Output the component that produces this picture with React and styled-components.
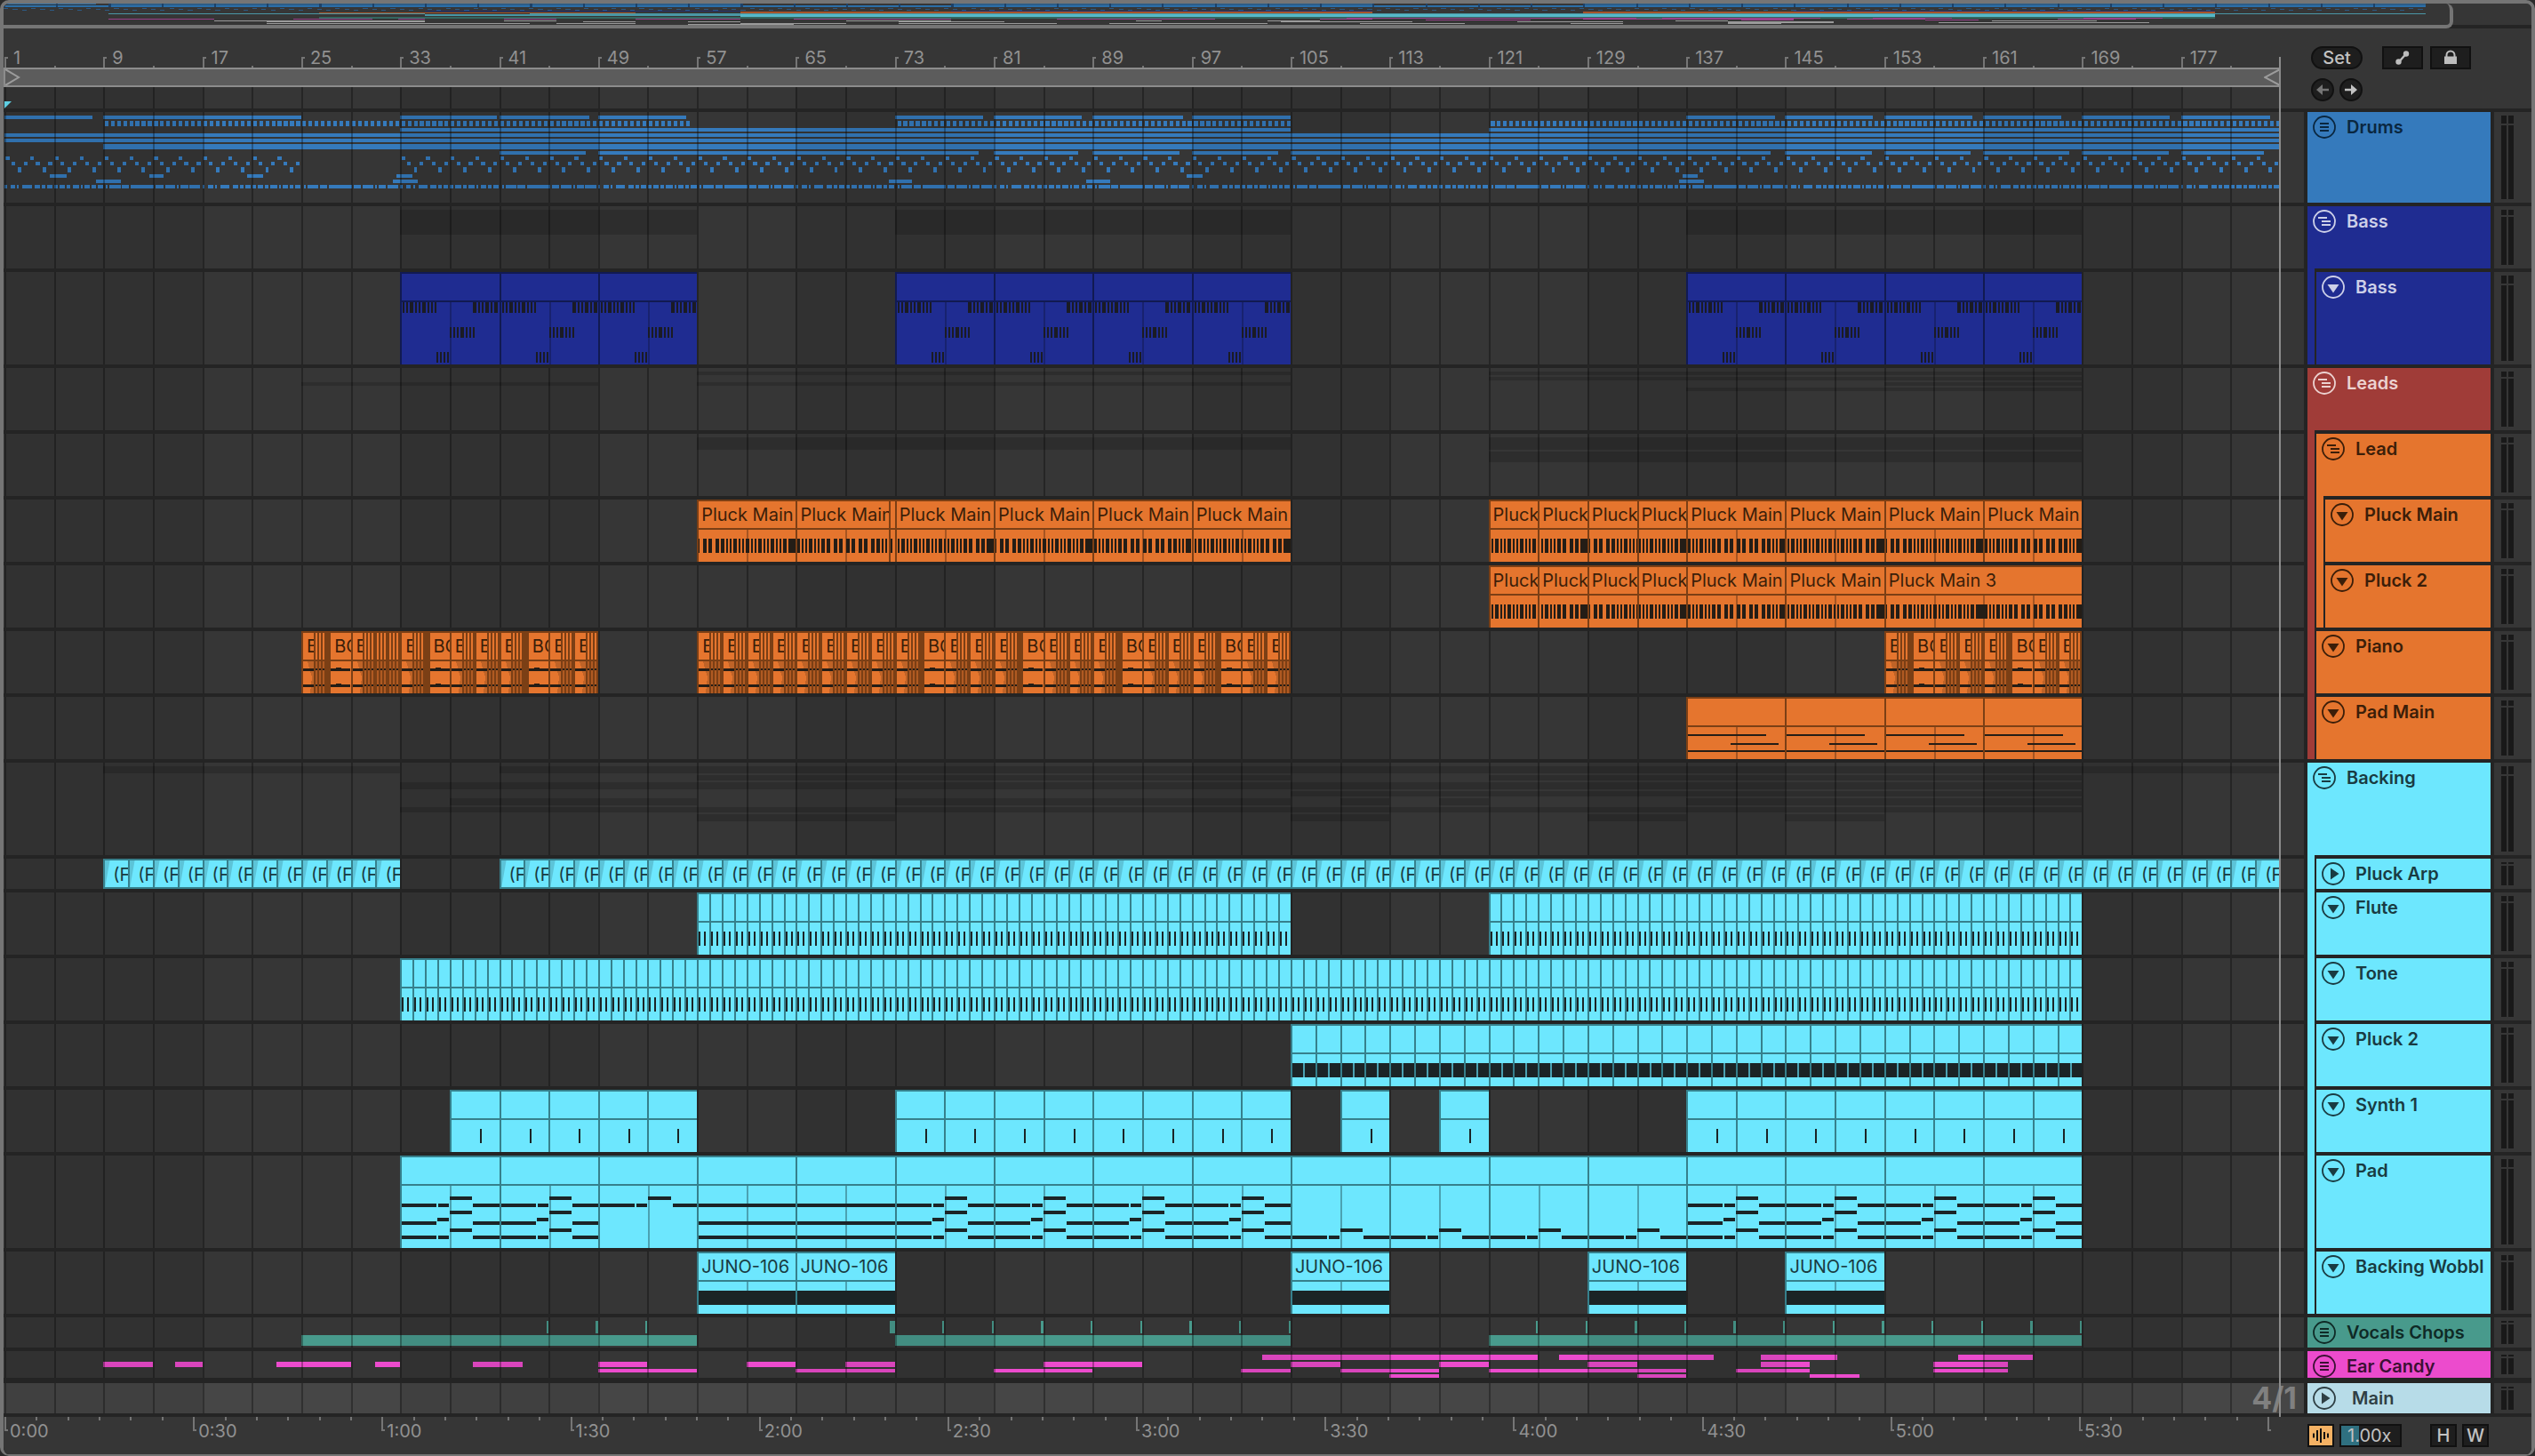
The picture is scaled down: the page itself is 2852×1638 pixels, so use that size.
import React from "react";
import styled, { createGlobalStyle } from "styled-components";

const BARS = 184;

const colors = {
  panel: "#363636",
  gap: "#242424",
  frame: "#757575",
  line: "#8c8c8c",
  text: "#919191",
  dark: "#1e1e1e",
  black: "#111111",
};

const blue = { fill: "#357abc", ink: "#0a2740" };
const navy = {
  fill: "#1f2c91",
  ink: "#cdd0e8",
  edge: "#111a52",
  inner: "#18226f",
  note: "#1a1b24",
};
const red = { fill: "#a03c38", ink: "#ecd2d0" };
const orange = {
  fill: "#e5752e",
  ink: "#3b1e09",
  edge: "#7b3f15",
  inner: "#a65522",
  note: "#241d16",
};
const cyan = {
  fill: "#6de7fe",
  ink: "#193b42",
  edge: "#36808c",
  inner: "#4ba2b2",
  note: "#1b2426",
};
const green = { fill: "#489a8c", ink: "#0f2a26" };
const pink = { fill: "#ec4bcd", ink: "#3c1034" };
const pale = { fill: "#b7dce8", ink: "#2f3f44" };

/* ---------- clip note shapes: [x, y, width, height] in clip pixels ---------- */

const runs = (list, y, h, unit = 2) =>
  list.map(([x, w]) => [x * unit, y, w * unit, h]);

const pluckA = runs(
  [
    [1.5, 1], [3.5, 2], [6.5, 1], [8.5, 1], [10.5, 2], [13.5, 1], [15.5, 1],
    [17.5, 2], [20.5, 1], [22.5, 1], [24.5, 2], [27.5, 1], [29.5, 1],
    [31.5, 2], [34.5, 1], [36.5, 1], [38.5, 2], [41.5, 2], [45.5, 2],
    [48.5, 2], [51.5, 4.5],
  ],
  10,
  16
);
const pluckB = runs(
  [
    [0.5, 1], [3.5, 2], [6.5, 2], [10.5, 2], [13.5, 2], [16.5, 1], [18.5, 1],
    [20.5, 2], [23.5, 1], [25.5, 1], [27.5, 2], [30.5, 1], [32.5, 1],
    [34.5, 2], [37.5, 1], [39.5, 1], [41.5, 2], [44.5, 1], [46.5, 1],
    [48.5, 2], [51.5, 4.5],
  ],
  10,
  16
);
const pluckC = runs(
  [
    [0.5, 2], [3.5, 1], [5.5, 1], [7.5, 2], [10.5, 1], [12.5, 1], [14.5, 2],
    [17.5, 2], [21.5, 2], [24.5, 2], [28.5, 2], [31.5, 2], [35.5, 2],
    [38.5, 2], [42.5, 2], [45.5, 2], [48.5, 1], [50.5, 1], [52.5, 3],
  ],
  10,
  16
);
const secondHalf = (notes) =>
  notes.filter(([x]) => x >= 55).map(([x, ...rest]) => [x - 55, ...rest]);

const bassNotes = [
  ...runs([[1.5, 1], [3.5, 1], [5.5, 2], [8.5, 1], [10.5, 1], [12.5, 2], [15.5, 1], [17.5, 1], [19.5, 1]], 0, 12),
  ...runs([[41, 2], [44, 1], [46, 1], [48, 2], [51, 1], [53, 2]], 0, 12),
  ...runs([[28, 1], [30, 1], [32, 1], [34, 2], [37, 1], [39, 1], [41, 1]], 28, 12),
  ...runs([[20.5, 1], [22.5, 1], [24.5, 1], [26.5, 1]], 56, 12),
];

const padMainNotes = [
  [0, 8, 90, 2],
  [50, 18, 54, 2],
  [0, 26, 112, 2],
];

const padFull = [
  [0, 20, 41, 4], [43, 20, 12, 4], [82, 20, 30, 4],
  [56, 12, 25, 4],
  [56, 28, 25, 4],
  [42, 36, 13, 4],
  [0, 40, 41, 4], [82, 40, 30, 4],
  [56, 48, 25, 4],
  [0, 56, 41, 4], [43, 56, 12, 4], [82, 56, 30, 4],
];
const padHigh = [[0, 20, 41, 4], [43, 20, 12, 4], [56, 12, 26, 4], [84, 20, 28, 4]];
const padHeld = [[0, 20, 112, 4], [0, 40, 112, 4], [0, 56, 112, 4]];
const padLow = [[0, 56, 41, 4], [43, 56, 12, 4], [56, 48, 25, 4], [82, 56, 30, 4]];

/* ---------- clips ---------- */

const repeat = (from, to, length, extra = {}) => {
  const clips = [];
  for (let at = from; at < to; at += length) {
    clips.push({ at, length, ...extra });
  }
  return clips;
};

const pianoBlock = (from, to) => {
  const clips = [];
  for (let at = from; at < to; at += 2) {
    const long = (at - from) % 8 === 2 && (from !== 57 || at >= 73);
    if (long) {
      clips.push({ at, length: 0.25, kind: "solid" });
      clips.push({ at: at + 0.25, length: 1.75, name: "BC", kind: "audio" });
    } else if (at === 31) {
      clips.push({ at, length: 1, kind: "slivers" });
      clips.push({ at: at + 1, length: 1, kind: "slivers" });
    } else {
      clips.push({ at, length: 1, name: "B", kind: "audio", fade: true });
      clips.push({ at: at + 1, length: 1, kind: "slivers" });
    }
  }
  return clips;
};

const main8 = { length: 8, name: "Pluck Main" };
const main4 = { length: 4, name: "Pluck Main" };
const eighths = [
  { at: 121, ...main4, notes: pluckA },
  { at: 125, ...main4, notes: secondHalf(pluckA) },
  { at: 129, ...main4, notes: pluckB },
  { at: 133, ...main4, notes: secondHalf(pluckB) },
  { at: 137, ...main8, notes: pluckC },
  { at: 145, ...main8, notes: pluckA },
];

const lanes = {
  bass: [
    ...repeat(33, 57, 8, { notes: bassNotes }),
    ...repeat(73, 105, 8, { notes: bassNotes }),
    ...repeat(137, 169, 8, { notes: bassNotes }),
  ],
  pluckMain: [
    { at: 57, ...main8, notes: pluckB },
    { at: 65, ...main8, length: 7.5, notes: pluckC },
    { at: 72.5, length: 0.5, notes: [[2, 10, 2, 16]] },
    { at: 73, ...main8, notes: pluckA },
    { at: 81, ...main8, notes: pluckB },
    { at: 89, ...main8, notes: pluckC },
    { at: 97, ...main8, notes: pluckA },
    ...eighths,
    { at: 153, ...main8, notes: pluckB },
    { at: 161, ...main8, notes: pluckC },
  ],
  pluckTwo: [
    ...eighths,
    {
      at: 153,
      length: 16,
      name: "Pluck Main 3",
      notes: [...pluckB, ...pluckC.map(([x, ...rest]) => [x + 111, ...rest])],
    },
  ],
  piano: [...pianoBlock(25, 49), ...pianoBlock(57, 105), ...pianoBlock(153, 169)],
  padMain: repeat(137, 169, 8, { notes: padMainNotes }),
  arp: [
    ...repeat(9, 33, 2, { name: "(F", kind: "flat" }),
    ...repeat(41, 185, 2, { name: "(F", kind: "flat" }),
  ],
  flute: [
    ...repeat(57, 105, 1, { notes: [[2, 10, 2, 16], [8, 10, 2, 16]] }),
    ...repeat(121, 169, 1, { notes: [[2, 10, 2, 16], [8, 10, 2, 16]] }),
  ],
  tone: repeat(33, 169, 1, { notes: [[2, 10, 2, 16], [8, 10, 2, 16]] }),
  pluckCyan: repeat(105, 169, 2, {
    notes: [[0, 10, 28, 16], [14, 10, 2, 16, cyan.inner]],
  }),
  synth: [
    ...repeat(37, 57, 4),
    ...repeat(73, 105, 4),
    ...repeat(109, 113, 4),
    ...repeat(117, 121, 4),
    ...repeat(137, 169, 4),
  ].map((clip) => ({ ...clip, notes: [[34, 10, 2, 16]] })),
  pad: [
    ...repeat(33, 49, 8, { notes: padFull }),
    ...repeat(49, 57, 8, { notes: padHigh }),
    ...repeat(57, 73, 8, { notes: padHeld }),
    ...repeat(73, 105, 8, { notes: padFull }),
    ...repeat(105, 137, 8, { notes: padLow }),
    ...repeat(137, 169, 8, { notes: padFull }),
  ],
  wobble: [57, 65, 105, 129, 145].map((at) => ({
    at,
    length: 8,
    name: "JUNO-106",
    notes: [[0, 10, 112, 16]],
  })),
};

/* ---------- group previews: [from bar, to bar, y, height] ---------- */

const span = (list, y, h) => list.map(([a, b]) => [a, b, y, h]);

const every = (from, to, step, width, y, h) => {
  const list = [];
  for (let at = from; at < to; at += step) {
    list.push([at, at + width, y, h]);
  }
  return list;
};

const kickRuns = [
  [0, 5], [13, 24], [28, 32], [40, 60], [67, 79], [83, 91], [95, 106],
  [110, 118], [122, 134], [138, 146], [150, 165], [169, 173], [177, 189],
  [193, 201], [205, 217], [224, 228], [232, 256], [259, 275], [279, 330],
  [334, 350], [354, 377], [381, 385], [389, 405], [408, 432],
];
const kicks = [];
for (let at = 1; at < 185; at += 16) {
  kickRuns.forEach(([a, b]) => {
    const start = at + a / 27.27;
    if (start < 185) {
      kicks.push([start, Math.min(at + b / 27.27, 185), 82, 4]);
    }
  });
}

const previews = {
  drums: [
    ...span(
      [
        [1, 8.1], [9, 25], [33, 40.8], [41, 48.3], [49, 56.1], [73, 80.1],
        [81, 88.1], [89, 96.3], [97, 105], [137, 144.2], [145, 152.1],
        [153, 160.1], [161, 167.3], [169, 176.1], [177, 184.2],
      ],
      4,
      4
    ),
    ...every(9.1, 56.2, 0.5, 0.3, 10, 6),
    ...every(73.2, 105, 0.5, 0.3, 10, 6),
    ...every(121.2, 185, 0.5, 0.3, 10, 6),
    ...span([[33, 105], [121, 185]], 18, 4),
    ...span([[1, 185]], 24, 4),
    ...span([[1, 185]], 30, 4),
    ...span([[9, 185]], 36, 6),
    ...span(
      [
        [41, 48], [49, 79.8], [81, 87.8], [89, 96], [97, 104], [105, 143.8],
        [145, 152], [153, 160], [161, 168], [169, 176], [177, 183.7],
      ],
      44,
      4
    ),
    ...every(1.1, 24, 2, 0.3, 50, 4),
    ...every(33.1, 185, 2, 0.3, 50, 4),
    ...every(1.55, 25, 1, 0.3, 56, 4),
    ...every(33.55, 184.8, 1, 0.3, 56, 4),
    ...every(2.1, 25, 2, 0.28, 62, 6),
    ...every(34.1, 185, 2, 0.28, 62, 6),
    ...span([[4.7, 6], [12.7, 13.9], [20.6, 21.9], [32.7, 34], [96.6, 97.9], [136.7, 137.9]], 70, 4),
    ...span([[8.4, 10.4], [32.4, 34.4], [72.5, 74.4], [88.5, 90.4], [136.4, 138.4]], 76, 4),
    ...kicks,
  ],
  bassGroup: span([[33, 57], [73, 105], [137, 169]], 4, 28),
  leads: [
    ...span([[57, 105], [121, 169]], 4, 4),
    ...span([[121, 169]], 10, 4),
    ...span([[25, 49], [57, 105], [153, 169]], 16, 4),
    ...span([[137, 169]], 22, 4),
  ],
  lead: [
    ...span([[57, 105], [121, 169]], 4, 14),
    ...span([[121, 169]], 20, 12),
  ],
  backing: [
    ...span([[9, 33], [41, 185]], 4, 8),
    ...span([[57, 105], [121, 169]], 14, 6),
    ...span([[33, 169]], 22, 8),
    ...span([[105, 169]], 32, 6),
    ...span([[37, 57], [73, 105], [109, 113], [117, 121], [137, 169]], 40, 8),
    ...span([[33, 169]], 50, 6),
    ...span([[57, 73], [105, 113], [129, 137], [145, 153]], 58, 8),
  ],
  vocals: [
    ...[45, 49, 53, 77, 81, 85, 89, 93, 97, 101, 105].map((b) => [b - 0.17, b, 4, 14]),
    ...[125, 129, 133, 137, 141, 145, 149, 153, 157, 161, 165, 169].map((b) => [b - 0.17, b, 4, 14]),
    [72.6, 73, 4, 14],
    ...span([[25, 57], [73, 105], [121, 169]], 20, 12),
  ],
  candy: [
    ...span([[102.7, 125], [126.7, 139.2], [143, 149.2], [159, 165]], 4, 6),
    ...span(
      [
        [9, 13], [14.8, 17], [23, 29], [31, 33], [38.9, 42.9], [49, 53],
        [61, 65], [69, 73], [85, 93], [105, 109], [117, 121], [129, 133],
        [143, 147], [157, 163],
      ],
      12,
      6
    ),
    ...span([[49, 57], [65, 73], [81, 89], [101, 105], [109, 117], [121, 137], [141, 147], [157, 163]], 20, 4),
    ...span([[113, 117], [133, 137], [147, 151]], 26, 4),
  ],
};

const shade = "rgba(0, 0, 0, 0.16)";

const tracks = [
  { id: "drums", name: "Drums", height: 102, theme: blue, icon: "list", preview: previews.drums },
  {
    id: "bassGroup", name: "Bass", height: 70, theme: navy, icon: "group", preview: previews.bassGroup, muted: true,
    children: [{ id: "bass", name: "Bass", height: 104, theme: navy, icon: "open", clips: lanes.bass }],
  },
  {
    id: "leads", name: "Leads", height: 70, theme: red, icon: "group", preview: previews.leads, muted: true,
    children: [
      {
        id: "lead", name: "Lead", height: 70, theme: orange, icon: "group", preview: previews.lead, muted: true,
        children: [
          { id: "pluckMain", name: "Pluck Main", height: 70, theme: orange, icon: "open", clips: lanes.pluckMain },
          { id: "pluckTwo", name: "Pluck 2", height: 70, theme: orange, icon: "open", clips: lanes.pluckTwo },
        ],
      },
      { id: "piano", name: "Piano", height: 70, theme: orange, icon: "open", clips: lanes.piano },
      { id: "padMain", name: "Pad Main", height: 70, theme: orange, icon: "open", clips: lanes.padMain },
    ],
  },
  {
    id: "backing", name: "Backing", height: 104, theme: cyan, icon: "group", preview: previews.backing, muted: true,
    children: [
      { id: "arp", name: "Pluck Arp", height: 34, theme: cyan, icon: "closed", clips: lanes.arp },
      { id: "flute", name: "Flute", height: 70, theme: cyan, icon: "open", clips: lanes.flute },
      { id: "tone", name: "Tone", height: 70, theme: cyan, icon: "open", clips: lanes.tone },
      { id: "pluckCyan", name: "Pluck 2", height: 70, theme: cyan, icon: "open", clips: lanes.pluckCyan },
      { id: "synth", name: "Synth 1", height: 70, theme: cyan, icon: "open", clips: lanes.synth },
      { id: "pad", name: "Pad", height: 104, theme: cyan, icon: "open", clips: lanes.pad },
      { id: "wobble", name: "Backing Wobbl", height: 70, theme: cyan, icon: "open", clips: lanes.wobble },
    ],
  },
  { id: "vocals", name: "Vocals Chops", height: 34, theme: green, icon: "list", preview: previews.vocals },
  { id: "candy", name: "Ear Candy", height: 30, theme: pink, icon: "list", preview: previews.candy },
];

const flatten = (list) =>
  list.flatMap((track) => [track, ...flatten(track.children || [])]);
const allTracks = flatten(tracks);

const cells = Array.from({ length: BARS / 4 }, (_, i) => i * 4 + 1);
const seconds = Array.from({ length: 73 }, (_, i) => i * 5);
const clock = (s) => `${Math.floor(s / 60)}:${String(s % 60).padStart(2, "0")}`;

/* ---------- drawings ---------- */

const ToggleIcon = ({ type }) => (
  <svg width="26" height="26" viewBox="0 0 26 26" aria-hidden="true">
    <circle cx="13" cy="13" r="12" fill="none" stroke="currentColor" strokeWidth="1.8" />
    {type === "list" && (
      <path d="M8 9h10M8 13h10M8 17h10" stroke="currentColor" strokeWidth="2" />
    )}
    {type === "group" && (
      <path d="M6 9h10M10 13h10M10 17h10" stroke="currentColor" strokeWidth="2" />
    )}
    {type === "open" && <path d="M6.5 10h13L13 19.5z" fill="currentColor" />}
    {type === "closed" && <path d="M10 6.5v13l9.5-6.5z" fill="currentColor" />}
  </svg>
);

const Preview = ({ shapes, height, fill }) => (
  <Drawing viewBox={`1 0 ${BARS} ${height}`} preserveAspectRatio="none" aria-hidden="true">
    {shapes.map(([a, b, y, h], i) => (
      <rect key={i} x={a} y={y} width={b - a} height={h} fill={fill} />
    ))}
  </Drawing>
);

const Notes = ({ notes = [], length, height, theme }) => {
  const width = length * 13.913;
  const inner = [];
  for (let bar = 4; bar < length; bar += 4) {
    inner.push(bar * 13.913);
  }
  return (
    <Drawing viewBox={`2 0 ${width - 2} ${height}`} preserveAspectRatio="none" aria-hidden="true">
      {inner.map((x) => (
        <rect key={x} x={x} y="0" width="2" height={height} fill={theme.inner} />
      ))}
      {notes.map(([x, y, w, h, fill = theme.note], i) => (
        <rect key={i} x={x} y={y} width={w} height={h} fill={fill} />
      ))}
    </Drawing>
  );
};

const Wave = ({ length, fade }) => {
  const width = length * 13.913;
  return (
    <Drawing viewBox={`2 0 ${width - 2} 36`} preserveAspectRatio="none" aria-hidden="true">
      {fade && <path d="M7 0H14V36H10L12 18Z" fill="#bf6327" />}
      {[9, 27].map((y) => (
        <g key={y} fill="#241d16">
          <rect x="0" y={y - 1} width={width} height="3" />
          {!fade && <rect x="8" y={y - 2} width="6" height="4" />}
        </g>
      ))}
    </Drawing>
  );
};

const Slivers = () => (
  <Drawing viewBox="0 0 14 68" preserveAspectRatio="none" aria-hidden="true">
    {[2, 6, 10].map((x) => (
      <g key={x}>
        <rect x={x} y="0" width="2" height="30" fill="#e5752e" />
        <rect x={x} y="32" width="2" height="36" fill="#b05a22" />
        <rect x={x} y="40" width="2" height="2" fill="#241d16" />
        <rect x={x} y="58" width="2" height="2" fill="#241d16" />
      </g>
    ))}
  </Drawing>
);

const miniPink = [
  [9, 17, 1, 8], [15, 17, 1, 2], [23, 17, 1, 6], [31, 17, 1, 2], [39, 17, 1, 4],
  [49, 17, 1, 8], [61, 17, 1, 4], [65, 17, 1, 8], [81, 17, 1, 12],
  [101, 17, 1, 4], [103, 16, 1, 22], [109, 18, 1, 8], [121, 17, 1, 16],
  [127, 16, 1, 12], [133, 18, 1, 4], [141, 17, 1, 6], [143, 16, 1, 6],
  [147, 18, 1, 4], [157, 17, 1, 6], [159, 16, 1, 6],
];

/* [from bar, to bar, y, height] */
const miniWhite = [
  [17, 33, 19, 1], [21, 33, 20, 1], [21, 25, 22, 1], [25, 41, 22, 1],
  [39, 43, 19, 1], [45, 49, 20, 1], [43, 49, 22, 1], [53, 57, 20, 1],
  [53, 61, 23, 1], [57, 65, 22, 1], [65, 73, 19, 1], [69, 77, 20, 1],
  [69, 81, 22, 1], [85, 97, 22, 1], [87, 89, 19, 1], [97, 101, 19, 1],
  [98, 108, 20, 1], [104, 112, 22, 1], [116, 124, 20, 1], [120, 124, 22, 1],
  [128, 132, 19, 1], [132, 140, 20, 2], [132, 136, 22, 1], [148, 160, 21, 1],
  [152, 160, 19, 1], [158, 164, 21, 1],
];

const Minimap = () => (
  <Drawing viewBox="1 0 185.8 24" preserveAspectRatio="none" aria-hidden="true">
    <g fill="#2b6ea8">
      <rect x="1" y="2" width="184" height="2" />
      <rect x="1" y="0" width="7" height="1" />
      <rect x="9" y="0" width="48" height="4" opacity="0.7" />
      <rect x="73" y="0" width="32" height="4" opacity="0.7" />
      <rect x="121" y="0" width="64" height="4" opacity="0.7" />
    </g>
    <g fill="#2c5a85">
      {every(1, 185, 0.7, 0.35, 6, 1).map(([a, b, y, h], i) => (
        <rect key={i} x={a} y={y + (i % 3) - 1} width={b - a} height={h} />
      ))}
      {cells.map((bar) => (
        <rect key={bar} x={bar} y="0" width="0.14" height="4" fill="#1d4168" />
      ))}
    </g>
    <g fill="#23306f">
      <rect x="33" y="8" width="24" height="1" />
      <rect x="73" y="8" width="32" height="1" />
      <rect x="137" y="8" width="32" height="1" />
    </g>
    <g fill="#a8552a">
      <rect x="25" y="10" width="24" height="1" />
      <rect x="57" y="9" width="48" height="2" />
      <rect x="121" y="9" width="48" height="2" />
    </g>
    <g fill="#4a97a5">
      <rect x="9" y="11" width="24" height="1" />
      <rect x="41" y="11" width="144" height="1" />
      <rect x="33" y="12" width="24" height="2" />
      <rect x="57" y="12" width="112" height="3" fill="#56b8c8" />
    </g>
    <rect x="25" y="15" width="144" height="2" fill="#336660" />
    <g fill="#99418a">
      {miniPink.map(([x, y, h, w]) => (
        <rect key={x} x={x} y={y} width={w} height={h} />
      ))}
    </g>
    <g fill="#9a9a9a">
      {miniWhite.map(([a, b, y, h], i) => (
        <rect key={i} x={a} y={y} width={b - a} height={h} />
      ))}
    </g>
  </Drawing>
);

/* ---------- parts ---------- */

const Grid = () => (
  <GridLines>
    {cells.map((bar) => (
      <GridCell key={bar} $shaded={Math.floor((bar - 1) / 16) % 2 === 0} />
    ))}
  </GridLines>
);

const Clip = ({ clip, theme, height }) => {
  const { at, length, name, kind, notes, fade } = clip;
  const start = Math.round((at - 1) * 4) + 1;
  const place = { gridColumn: `${start} / span ${Math.round(length * 4)}` };
  if (kind === "slivers" || kind === "solid") {
    return <SliverBox style={place}>{kind === "slivers" && <Slivers />}</SliverBox>;
  }
  if (kind === "flat") {
    return (
      <FlatClip style={place} $theme={theme}>
        {name}
      </FlatClip>
    );
  }
  return (
    <ClipBox style={place} $theme={theme}>
      <ClipTitle $theme={theme} $audio={kind === "audio"}>
        {name}
      </ClipTitle>
      <ClipBody>
        {kind === "audio" ? (
          <Wave length={length} fade={fade} />
        ) : (
          <Notes notes={notes} length={length} height={height - 34} theme={theme} />
        )}
      </ClipBody>
    </ClipBox>
  );
};

const TrackLane = ({ track }) => (
  <Lane $height={track.height}>
    <LaneArea>
      {track.preview && (
        <PreviewLayer>
          <Preview
            shapes={track.preview}
            height={track.height}
            fill={track.muted ? shade : track.theme.fill}
          />
        </PreviewLayer>
      )}
      <Grid />
      {track.clips && (
        <ClipRow>
          {track.clips.map((clip) => (
            <Clip key={clip.at} clip={clip} theme={track.theme} height={track.height} />
          ))}
        </ClipRow>
      )}
    </LaneArea>
  </Lane>
);

const TrackHead = ({ track, wide }) => (
  <Head $height={track.height} $theme={track.theme}>
    <Toggle type="button" aria-label={`Fold ${track.name}`}>
      <ToggleIcon type={track.icon} />
    </Toggle>
    <TrackName $wide={wide}>{track.name}</TrackName>
  </Head>
);

const TrackGroup = ({ track }) => (
  <GroupBox $theme={track.theme}>
    <TrackHead track={track} />
    {track.children && (
      <GroupChildren>
        {track.children.map((child) => (
          <TrackGroup key={child.id} track={child} />
        ))}
      </GroupChildren>
    )}
  </GroupBox>
);

const Meter = ({ height }) => (
  <MeterBox $height={height}>
    <MeterBar>
      <MeterPart $grow={1} />
      <MeterPart $grow={9} />
    </MeterBar>
    <MeterBar>
      <MeterPart $grow={1} />
      <MeterPart $grow={9} />
    </MeterBar>
  </MeterBox>
);

const mainTrack = { name: "Main", height: 34, theme: pale, icon: "closed" };

const App = () => (
  <>
    <GlobalStyle />
    <Frame>
      <OverviewBar>
        <OverviewWindow>
          <Minimap />
        </OverviewWindow>
      </OverviewBar>
      <Workspace>
        <Arrangement>
          <BeatRuler>
            {cells.map((bar, i) => (
              <BeatCell key={bar}>
                <BeatTick $major={i % 2 === 0} />
                {i % 2 === 0 && <RulerLabel>{bar}</RulerLabel>}
              </BeatCell>
            ))}
          </BeatRuler>
          <LoopRow>
            <LoopBar>
              <svg width="18" height="18" viewBox="0 0 18 18" aria-hidden="true">
                <path d="M0 0L15 9L0 18" fill="none" stroke="#9b9b9b" strokeWidth="2" />
              </svg>
              <svg width="18" height="18" viewBox="0 0 18 18" aria-hidden="true">
                <path d="M18 0L1 9L18 18" fill="none" stroke="#9b9b9b" strokeWidth="2" />
              </svg>
            </LoopBar>
          </LoopRow>
          <ScrubRow>
            <LaneArea>
              <Grid />
              <StartMarker width="8" height="8" viewBox="0 0 8 8" aria-hidden="true">
                <path d="M0 0H8L0 8Z" fill="#5fcfe3" />
              </StartMarker>
            </LaneArea>
          </ScrubRow>
          <LaneList>
            {allTracks.map((track) => (
              <TrackLane key={track.id} track={track} />
            ))}
          </LaneList>
          <MainLane>
            <LaneArea>
              <Grid />
            </LaneArea>
            <Signature>4/1</Signature>
          </MainLane>
          <TimeRuler>
            {seconds.map((s) => (
              <TimeCell key={s}>
                <TimeTick $major={s % 30 === 0} />
                {s % 30 === 0 && s < 360 && <RulerLabel $time>{clock(s)}</RulerLabel>}
              </TimeCell>
            ))}
          </TimeRuler>
          <Playhead />
        </Arrangement>
        <Sidebar>
          <SidebarTop>
            <ControlRow>
              <SetButton type="button">Set</SetButton>
              <BoxButton type="button" aria-label="Automation" $first>
                <svg width="18" height="18" viewBox="0 0 18 18" aria-hidden="true">
                  <path d="M5 13.5L13 4.5" stroke="#bdbdbd" strokeWidth="2.4" />
                  <circle cx="4.5" cy="13.5" r="3.2" fill="#bdbdbd" />
                  <circle cx="13" cy="4.5" r="3.2" fill="#bdbdbd" />
                </svg>
              </BoxButton>
              <BoxButton type="button" aria-label="Lock">
                <svg width="18" height="18" viewBox="0 0 18 18" aria-hidden="true">
                  <path d="M4.5 8V6a4.5 4.5 0 0 1 9 0v2" fill="none" stroke="#bdbdbd" strokeWidth="2" />
                  <rect x="2" y="7.5" width="14" height="8.5" fill="#bdbdbd" />
                </svg>
              </BoxButton>
            </ControlRow>
            <ControlRow>
              <RoundButton type="button" aria-label="Previous locator" $dim>
                <svg width="16" height="14" viewBox="0 0 16 14" aria-hidden="true">
                  <path d="M15 7H6" stroke="currentColor" strokeWidth="2.4" />
                  <path d="M8 1V13L1 7Z" fill="currentColor" />
                </svg>
              </RoundButton>
              <RoundButton type="button" aria-label="Next locator">
                <svg width="16" height="14" viewBox="0 0 16 14" aria-hidden="true">
                  <path d="M1 7H10" stroke="currentColor" strokeWidth="2.4" />
                  <path d="M8 1V13L15 7Z" fill="currentColor" />
                </svg>
              </RoundButton>
            </ControlRow>
          </SidebarTop>
          <MixerRows>
            <HeadColumn>
              {tracks.map((track) => (
                <TrackGroup key={track.id} track={track} />
              ))}
              <MainSlot>
                <TrackHead track={mainTrack} wide />
              </MainSlot>
            </HeadColumn>
            <MeterColumn>
              {allTracks.map((track) => (
                <Meter key={track.id} height={track.height} />
              ))}
              <MainSlot>
                <Meter height={34} />
              </MainSlot>
            </MeterColumn>
          </MixerRows>
          <SidebarFoot>
            <WaveButton type="button" aria-label="Waveform zoom">
              <svg width="20" height="18" viewBox="0 0 20 18" aria-hidden="true">
                <path
                  d="M2 6.5v5M6 3v12M10 1v16M14 5v8M18 6.5v5"
                  stroke="#111"
                  strokeWidth="2"
                />
              </svg>
            </WaveButton>
            <ZoomField defaultValue="1.00x" aria-label="Zoom" />
            <FootSpacer />
            <LetterButton type="button">H</LetterButton>
            <LetterButton type="button">W</LetterButton>
          </SidebarFoot>
        </Sidebar>
      </Workspace>
    </Frame>
  </>
);

export default App;

const GlobalStyle = createGlobalStyle`
  * {
    box-sizing: border-box;
  }
  body {
    margin: 0;
    background: #2a2a2a;
    font-family: Inter, "Liberation Sans", sans-serif;
    font-size: 20px;
  }
  button,
  input {
    font: inherit;
    margin: 0;
    padding: 0;
  }
`;

const Drawing = styled.svg`
  display: block;
  width: 100%;
  height: 100%;
  shape-rendering: crispEdges;
`;

const Frame = styled.div`
  background: ${colors.panel};
  border: 4px solid ${colors.frame};
  border-bottom-width: 2px;
  border-radius: 10px;
  overflow: hidden;
`;

const OverviewBar = styled.div`
  height: 28px;
  padding-right: 88px;
  background: linear-gradient(${colors.panel} 24px, ${colors.gap} 24px);
`;

const OverviewWindow = styled.div`
  height: 28px;
  border: 4px solid ${colors.frame};
  border-width: 0 4px 4px 0;
  border-radius: 0 8px 8px 0;
`;

const Workspace = styled.div`
  display: grid;
  grid-template-columns: minmax(0, 1fr) 256px;
`;

const Arrangement = styled.main`
  position: relative;
  min-width: 0;
  background: ${colors.gap};
`;

const BeatRuler = styled.div`
  display: grid;
  grid-template-columns: repeat(46, minmax(0, 1fr));
  height: 44px;
  padding: 0 27px 0 1px;
  background: ${colors.panel};
`;

const BeatCell = styled.div`
  display: flex;
  align-items: flex-end;
  gap: 6px;
`;

const BeatTick = styled.span`
  flex: none;
  width: ${({ $major }) => ($major ? 4 : 2)}px;
  height: ${({ $major }) => ($major ? 12 : 2)}px;
  border-left: 2px solid ${colors.frame};
  border-top: 2px solid ${colors.frame};
`;

const RulerLabel = styled.span`
  color: ${colors.text};
  font-size: 20px;
  line-height: ${({ $time }) => ($time ? 32 : 22)}px;
  white-space: nowrap;
`;

const LoopRow = styled.div`
  padding: 0 27px 0 0;
  background: ${colors.panel};
`;

const LoopBar = styled.div`
  display: flex;
  justify-content: space-between;
  height: 22px;
  border: 2px solid ${colors.line};
  border-width: 2px 0 2px 2px;
  background: #5c5c5c;
`;

const Lane = styled.div`
  height: ${({ $height }) => $height}px;
  padding: 0 27px 0 1px;
  background: ${colors.panel};
`;

const ScrubRow = styled(Lane)`
  height: 24px;
`;

const LaneArea = styled.div`
  position: relative;
  height: 100%;
`;

const StartMarker = styled.svg`
  position: absolute;
  left: 0;
  bottom: 0;
`;

const LaneList = styled.div`
  display: flex;
  flex-direction: column;
  gap: 4px;
  padding: 4px 0 6px;
`;

const PreviewLayer = styled.div`
  height: 100%;
`;

const GridLines = styled.div`
  position: absolute;
  inset: 0;
  display: grid;
  grid-template-columns: repeat(46, minmax(0, 1fr));
`;

const GridCell = styled.div`
  border-left: 2px solid rgba(0, 0, 0, 0.3);
  background: ${({ $shaded }) => ($shaded ? "rgba(0, 0, 0, 0.08)" : "none")};
`;

const ClipRow = styled.div`
  position: relative;
  display: grid;
  grid-template-columns: repeat(${BARS * 4}, minmax(0, 1fr));
  grid-template-rows: 100%;
  height: 100%;
`;

const ClipBox = styled.div`
  grid-row: 1;
  display: flex;
  flex-direction: column;
  min-width: 0;
  overflow: hidden;
  background: ${({ $theme }) => $theme.fill};
  border: 2px solid ${({ $theme }) => $theme.edge};
  border-width: 2px 0 0 2px;
`;

const ClipTitle = styled.div`
  flex: none;
  height: 32px;
  padding-left: ${({ $audio }) => ($audio ? 4 : 3)}px;
  overflow: hidden;
  border-bottom: 2px solid ${({ $theme }) => $theme.edge};
  color: ${({ $theme }) => $theme.ink};
  font-size: 20px;
  line-height: 30px;
  white-space: nowrap;
`;

const ClipBody = styled.div`
  flex: 1;
  min-height: 0;
`;

const FlatClip = styled.div`
  grid-row: 1;
  min-width: 0;
  padding-left: 9px;
  overflow: hidden;
  border: 2px solid ${({ $theme }) => $theme.edge};
  border-right: 0;
  background: linear-gradient(100deg, #5cc4d8 5px, ${({ $theme }) => $theme.fill} 6px);
  color: ${({ $theme }) => $theme.ink};
  font-size: 20px;
  line-height: 32px;
  white-space: nowrap;
`;

const SliverBox = styled.div`
  grid-row: 1;
  min-width: 0;
  padding-top: 2px;
  background: #7b3f15;
`;

const MainLane = styled(Lane)`
  position: relative;
  height: 34px;
  background: #464646;
`;

const Signature = styled.span`
  position: absolute;
  right: 8px;
  top: 0;
  color: #808080;
  font-size: 34px;
  font-weight: 700;
  line-height: 34px;
`;

const TimeRuler = styled.div`
  display: grid;
  grid-template-columns: repeat(72, minmax(0, 500fr)) minmax(0, 197fr);
  height: 46px;
  padding: 0 27px 0 1px;
  border-top: 4px solid ${colors.gap};
  background: ${colors.panel};
`;

const TimeCell = styled.div`
  display: flex;
  align-items: flex-start;
  gap: 2px;
`;

const TimeTick = styled.span`
  flex: none;
  width: ${({ $major }) => ($major ? 4 : 2)}px;
  height: ${({ $major }) => ($major ? 16 : 4)}px;
  border-left: 2px solid ${colors.frame};
  border-bottom: ${({ $major }) => ($major ? 2 : 0)}px solid ${colors.frame};
`;

const Playhead = styled.div`
  position: absolute;
  top: 32px;
  right: 26px;
  bottom: 42px;
  width: 2px;
  background: ${colors.line};
`;

const Sidebar = styled.aside`
  display: flex;
  flex-direction: column;
  background: ${colors.gap};
`;

const SidebarTop = styled.div`
  display: flex;
  flex-direction: column;
  gap: 10px;
  height: 90px;
  padding: 20px 8px 0;
  background: ${colors.panel};
`;

const ControlRow = styled.div`
  display: flex;
  gap: 6px;
`;

const Control = styled.button`
  display: flex;
  align-items: center;
  justify-content: center;
  height: 26px;
  border: 2px solid ${colors.black};
  background: ${colors.dark};
  color: #c2c2c2;
  font-size: 20px;
  font-weight: 500;
  line-height: 22px;
`;

const SetButton = styled(Control)`
  width: 58px;
  border-radius: 13px;
`;

const BoxButton = styled(Control)`
  width: 46px;
  margin-left: ${({ $first }) => ($first ? 16 : 2)}px;
`;

const RoundButton = styled(Control)`
  width: 26px;
  border-radius: 50%;
  color: ${({ $dim }) => ($dim ? "#757575" : "#c2c2c2")};
`;

const MixerRows = styled.div`
  display: grid;
  grid-template-columns: minmax(0, 1fr) 42px;
  gap: 4px;
  padding: 4px 0 4px 4px;
`;

const HeadColumn = styled.div`
  display: flex;
  flex-direction: column;
  gap: 4px;
  min-width: 0;
`;

const MeterColumn = styled(HeadColumn)``;

const MainSlot = styled.div`
  padding-top: 2px;
`;

const GroupBox = styled.section`
  background: ${({ $theme }) => $theme.fill};
`;

const GroupChildren = styled.div`
  display: flex;
  flex-direction: column;
  gap: 4px;
  margin-left: 8px;
  padding: 4px 0 0 2px;
  background: ${colors.gap};
`;

const Head = styled.div`
  display: flex;
  align-items: flex-start;
  height: ${({ $height }) => $height}px;
  padding: 4px 6px 0;
  overflow: hidden;
  background: ${({ $theme }) => $theme.fill};
  color: ${({ $theme }) => $theme.ink};
`;

const Toggle = styled.button`
  flex: none;
  display: flex;
  width: 26px;
  height: 26px;
  border: 0;
  background: none;
  color: inherit;
`;

const TrackName = styled.span`
  margin-left: ${({ $wide }) => ($wide ? 18 : 12)}px;
  font-size: 20px;
  font-weight: 600;
  line-height: 26px;
  white-space: nowrap;
`;

const MeterBox = styled.div`
  display: flex;
  gap: 2px;
  height: ${({ $height }) => $height}px;
  padding: 4px 8px;
  background: ${colors.panel};
`;

const MeterBar = styled.div`
  display: flex;
  flex-direction: column;
  gap: 2px;
  width: 6px;
`;

const MeterPart = styled.div`
  flex: ${({ $grow }) => $grow} 1 0;
  background: #191919;
`;

const SidebarFoot = styled.div`
  display: flex;
  flex: 1;
  align-items: flex-start;
  gap: 6px;
  padding: 8px 48px 0 4px;
  background: ${colors.panel};
`;

const WaveButton = styled(Control)`
  width: 30px;
  background: #f5b264;
`;

const ZoomField = styled.input`
  width: 70px;
  height: 26px;
  padding-left: 7px;
  border: 2px solid ${colors.black};
  background: linear-gradient(to right, #2f7080 20px, ${colors.dark} 20px);
  color: #c2c2c2;
  font-size: 20px;
  line-height: 22px;
`;

const FootSpacer = styled.div`
  flex: 1;
`;

const LetterButton = styled(Control)`
  width: 30px;
`;
